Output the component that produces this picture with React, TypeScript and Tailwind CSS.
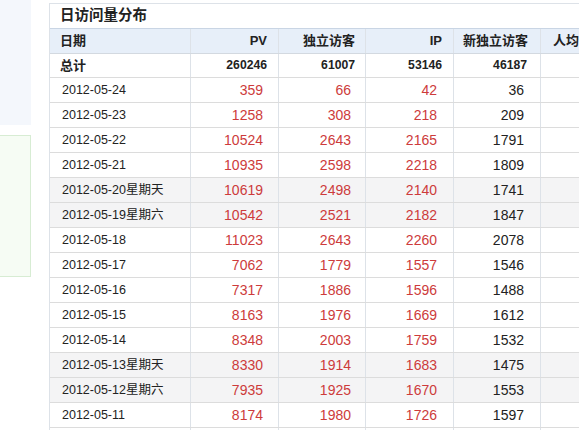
import React from "react";

type Row = { d: string; pv: string; uv: string; ip: string; nu: string; wk?: boolean };

const rows: Row[] = [
  { d: "2012-05-24", pv: "359", uv: "66", ip: "42", nu: "36" },
  { d: "2012-05-23", pv: "1258", uv: "308", ip: "218", nu: "209" },
  { d: "2012-05-22", pv: "10524", uv: "2643", ip: "2165", nu: "1791" },
  { d: "2012-05-21", pv: "10935", uv: "2598", ip: "2218", nu: "1809" },
  { d: "2012-05-20星期天", pv: "10619", uv: "2498", ip: "2140", nu: "1741", wk: true },
  { d: "2012-05-19星期六", pv: "10542", uv: "2521", ip: "2182", nu: "1847", wk: true },
  { d: "2012-05-18", pv: "11023", uv: "2643", ip: "2260", nu: "2078" },
  { d: "2012-05-17", pv: "7062", uv: "1779", ip: "1557", nu: "1546" },
  { d: "2012-05-16", pv: "7317", uv: "1886", ip: "1596", nu: "1488" },
  { d: "2012-05-15", pv: "8163", uv: "1976", ip: "1669", nu: "1612" },
  { d: "2012-05-14", pv: "8348", uv: "2003", ip: "1759", nu: "1532" },
  { d: "2012-05-13星期天", pv: "8330", uv: "1914", ip: "1683", nu: "1475", wk: true },
  { d: "2012-05-12星期六", pv: "7935", uv: "1925", ip: "1670", nu: "1553", wk: true },
  { d: "2012-05-11", pv: "8174", uv: "1980", ip: "1726", nu: "1597" },
];

const font = { fontFamily: '"Liberation Sans", Arial, "Noto Sans CJK SC", sans-serif' };

const cell = "border-r border-[#dde2e8] flex items-center";
const widths = ["w-[141px]", "w-[88px]", "w-[87px]", "w-[88px]", "w-[87px]", "w-[102px]"];

export default function App() {
  return (
    <div className="w-[579px] h-[430px] overflow-hidden bg-white relative" style={font}>
      <div className="flex">
        {/* left sidebar */}
        <div className="w-[31px] shrink-0 flex flex-col">
          <div className="h-[125px] bg-[#f4f7fc]" />
          <div className="h-[10px]" />
          <div className="h-[142px] bg-[#f6fcf4] border border-l-0 border-[#d7ecd3]" />
        </div>
        <div className="w-[18px] shrink-0" />
        {/* table */}
        <div className="mt-[3px] w-[700px] shrink-0 border-l border-t border-[#dde2e8]">
          <div className="h-[25px] flex items-center pl-[10px] border-b border-[#c9d5e4] bg-white text-[14.5px] font-bold text-[#222]">
            日访问量分布
          </div>
          {/* header */}
          <div className="h-[25px] flex bg-[#e7eff9] border-b border-[#d3d9e0] text-[13px] font-bold text-[#222]">
            <div className={`${widths[0]} ${cell} pl-[10px]`}>日期</div>
            <div className={`${widths[1]} ${cell} justify-end pr-[11px]`}>PV</div>
            <div className={`${widths[2]} ${cell} justify-end pr-[10px]`}>独立访客</div>
            <div className={`${widths[3]} ${cell} justify-end pr-[11px]`}>IP</div>
            <div className={`${widths[4]} ${cell} justify-end pr-[12px]`}>新独立访客</div>
            <div className={`${widths[5]} ${cell} justify-end pr-[11px]`}>人均访问页数</div>
          </div>
          {/* total */}
          <div className="h-[24px] flex border-b border-[#dcdcdc] text-[12.2px] font-bold text-[#222]">
            <div className={`${widths[0]} ${cell} pl-[10px] text-[13px]`}>总计</div>
            <div className={`${widths[1]} ${cell} justify-end pr-[11px]`}>260246</div>
            <div className={`${widths[2]} ${cell} justify-end pr-[10px]`}>61007</div>
            <div className={`${widths[3]} ${cell} justify-end pr-[11px]`}>53146</div>
            <div className={`${widths[4]} ${cell} justify-end pr-[13px]`}>46187</div>
            <div className={`${widths[5]} ${cell}`} />
          </div>
          {rows.map((r) => (
            <div
              key={r.d}
              className={`h-[25px] flex border-b border-[#dcdcdc] ${r.wk ? "bg-[#f4f4f5]" : "bg-white"}`}
            >
              <div className={`${widths[0]} ${cell} pl-[12px] text-[12.5px] text-[#222]`}>{r.d}</div>
              <div className={`${widths[1]} ${cell} justify-end pr-[15px] text-[14px] text-[#cd3b3b]`}>{r.pv}</div>
              <div className={`${widths[2]} ${cell} justify-end pr-[14px] text-[14px] text-[#cd3b3b]`}>{r.uv}</div>
              <div className={`${widths[3]} ${cell} justify-end pr-[16px] text-[14px] text-[#cd3b3b]`}>{r.ip}</div>
              <div className={`${widths[4]} ${cell} justify-end pr-[16px] text-[14px] text-[#222]`}>{r.nu}</div>
              <div className={`${widths[5]} ${cell}`} />
            </div>
          ))}
          <div className="h-[25px] flex">
            {widths.map((w) => (
              <div key={w} className={`${w} ${cell}`} />
            ))}
          </div>
        </div>
      </div>
    </div>
  );
}
